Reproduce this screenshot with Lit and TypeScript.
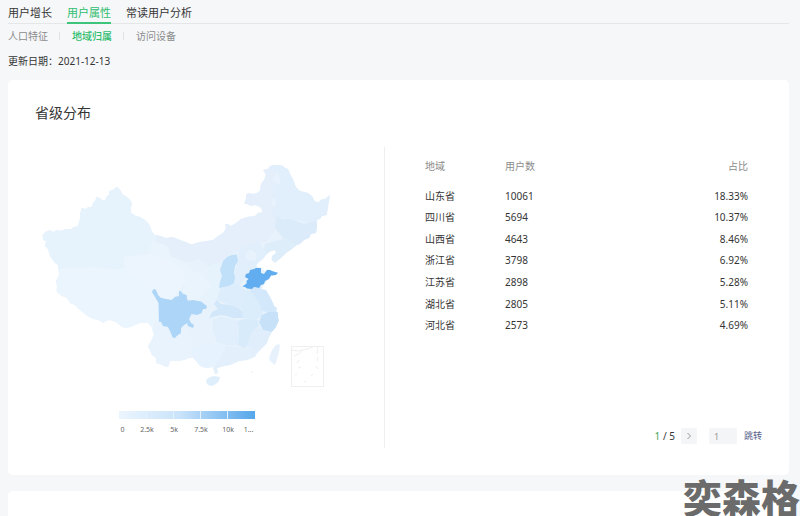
import { LitElement, html, svg, css } from "lit";
import { customElement, state } from "lit/decorators.js";

interface Region { name: string; fill: string; d: string; }

const MAINLAND =
  "M42.700 235L45 232 48 231 50 230 53 232 57 230 60 231 66 229 71 229 74 227 78 226 79 222 80 219 80 214 81.700 208 86 209 88 207 91.700 207 93 203 95 201 96.700 197 100 198 102 200 105 200.700 107 196 109 195 109 191 113 190 115 188 117.300 187 121 191 122 194 127 197 130 200 132 203 131 208 131 213 136 216 140 217 145 220 149 224 150.700 228 152 232 155 235 160 236 166 238 173 237 180 240 186 242 190 244 193 244 200 242 206.700 241 213 240 218 236 223 233 226 228 225 224 228 224 231 226 236 223 241 219 248 216.700 255 216 258 213 262.700 212 261 208 258 206 255 205 251 206 247 204 244 204 246 199 246 195 248 193 253 194 257 193 260 190.700 261 184 264 180 266 175 263 170 268 169 270 166 276.700 165 283 166 285 168 288 169 290 174 293 179 295 185 296.700 188 300 191 308 193 312 196 315 201.700 319 202 322 199 325 199 330 195 329 201 328 207 326.700 215 322 216 320 219 316.700 220 317 226 316 233 311 234 309 238 304 240 300 244 296.700 245 292 249 286 253 281 258 275 262.700 271.700 260 272 256 276 253 275 250 269 252 264 258 258 263 256 266 261 268 265 271 268 269 273 271 278 272.700 275 275 270 276.700 267 281 264 285 261 289 266 290 270 297 273 303 274 306 277 308 276 311 278 313 278 318 279 320 276 327 272 332 269 337 267 343 262 348 257 353 255 356.700 247 360 239 361 230 365 224 366 217 368 218 373 215 374 213 367 206 368 200 366 196 361 193 358 189 358 184 360 177 361 170 361 168 367 164 366 160 364 156 363 156 358 152 355 148 346 151 341 154 335 151.700 327 148 323 140 323 133 326 127 328 122 327 116 322 110 320 106 321 103 323 99 320 93 319 86 315 80 310 75 305 70 303 67 298 62 296 56.700 292 57 286 56 281 59 275 58 265 55 263 52 259 50 256 48 249 45 246 46 241 43 240z";

const REGIONS: Region[] = [
  { name: "西藏自治区", fill: "#ebf5fd", d: "M40 267L86 268 124 256 128 272 150 282 160 298 157 330 130 345 40 310z" },
  { name: "新疆维吾尔自治区", fill: "#e6f2fc", d: "M35 180H140L162 232 158 240 160 246 150 249 146 254 126 256 123 262 125 268 112 269 90 267 58 269 35 260z" },
  { name: "青海省", fill: "#ecf5fd", d: "M124 257L150 254 168 259 183 268 187 281 179 290 171 300 160 298 153 291 140 280 128 272z" },
  { name: "甘肃省", fill: "#eaf4fd", d: "M153 240L166 244 170 256 184 260 191 270 203 275 211 286 203 295 198 300 188 300 183 291 187 281 183 268 168 259 148 254z" },
  { name: "内蒙古自治区", fill: "#e4effb", d: "M157 230L195 236 240 200 242 160 290 160 272 178 280 186 271 202 276 216 277 228 266 242 250 246 240 250 229 255 220 262 208 266 199 259 190 262 184 262 171 256 168 246 156 242z" },
  { name: "黑龙江省", fill: "#e1eefb", d: "M263 160H290L335 190V220L316 224 306 222 292 219 276 217 271 210 277 203 272 195 274 186 281 183 278 173z" },
  { name: "吉林省", fill: "#dbebfa", d: "M276 216L283 219 292 219 304 224 318 220 320 238 298 247 291 241 284 239 275 228z" },
  { name: "辽宁省", fill: "#deedfa", d: "M265 244L275 241 287 238 298 246 284 262 270 266 272 251 262 257z" },
  { name: "河北省", fill: "#e0effb", d: "M239 249L249 245 259 243 266 252 262 262 256 268 249 270 244 280 238 287 234 284 235 271 238 261z" },
  { name: "北京市", fill: "#e7f2fc", d: "M246 252L251 249 256 253 256 261 248 260 245 257z" },
  { name: "陕西省", fill: "#e6f2fc", d: "M209 270L222 260 220 288 217 300 207 303 199 298 211 286z" },
  { name: "河南省", fill: "#deedfb", d: "M220 289L234 283 242 287 246 292 244 304 241 310 230 305 217 300z" },
  { name: "湖北省", fill: "#d2e8fa", d: "M217 300L221 304 230 305 238 308 243 312 244 318 233 318 227 316 220 315 209 318 212 312 218 309 214 304z" },
  { name: "安徽省", fill: "#dbecfb", d: "M244 290L252 291 258 300 263 308 262 316 256 320 243 318 242 308z" },
  { name: "江苏省", fill: "#d3e8fa", d: "M249 289L261 287 282 300 282 312 268 312 262 311 259 302z" },
  { name: "浙江省", fill: "#c7e1f8", d: "M262 315L268 312 282 312V326L271 332 263 330 259 322z" },
  { name: "江西省", fill: "#d8ebfa", d: "M238 321L245 319 258 320 259 326 253 331 250 336 248 345 244 348 238 345 239 332z" },
  { name: "湖南省", fill: "#e0effb", d: "M213 320L220 317 233 319 238 321 239 332 238 345 226 345 217 342 213 330z" },
  { name: "福建省", fill: "#e0eefb", d: "M259 327L263 330 271 332 280 332 262 356 248 346 250 336 253 331z" },
  { name: "广东省", fill: "#e3f0fc", d: "M226 346L244 348 250 346 262 356 215 378 212 366 220 358z" },
  { name: "广西壮族自治区", fill: "#e6f2fd", d: "M195 347L213 343 226 346 220 358 212 370 196 368 189 355z" },
  { name: "云南省", fill: "#e8f3fd", d: "M156 321L165 327 173 338 181 330 187 328 193 345 190 352 196 361 180 370 150 372 146 345z" },
];

const ISLANDS_AND_PEAKS: Region[] = [
  { name: "山西省", fill: "#c0dff9", d: "M223 261L227 257 231.700 255 236.700 254.500 238 261 235 266 234 272 235 278 234 283 229 286 219 288 220 282 222 276 220 270z" },
  { name: "四川省", fill: "#add5f8", d: "M152 292L153 289.500 155 289 157 292 158 295 160.700 297.700 166 299 171.700 300 175 297 179 296 179 291 181 291.500 183 294 186.700 295 187 299 188 300.700 193 300 201.700 301.700 204 304 207 306 206 309 203 309 201.700 313 197 315 191.700 314 189 319 191 323 194 325 193 328 188 326 187 323 184 325 181 328 181 333 176.700 336 175 338 172.700 337.500 170 331 168 327 163 326 161 321.700 159 321.700 158.500 303 155 297z" },
  { name: "山东省", fill: "#62adef", d: "M242.300 286.500L246.700 283.500 246.500 281 248.500 279 245 277 246 274 249 273 250 270 254 269 256 268 261 268 261 273 264 274 267 270 270 270 272 271 275 272 278 272.700 276 275 271 275.500 269 279 265 281 264 284 261 285 259 288 254 287 252 289 247 288.500 245 287z" },
  { name: "台湾省", fill: "#e6f1fc", d: "M272 350L275 346 278 344 280 345 279 352 277 359 275 365 271 362 269 358z" },
  { name: "海南省", fill: "#dfeefb", d: "M207 379L210 377 214 376 220 377 219 381 216 384 212 386 208 385 206 382z" },
];

const ROWS: [string, number, string][] = [
  ["山东省", 10061, "18.33%"],
  ["四川省", 5694, "10.37%"],
  ["山西省", 4643, "8.46%"],
  ["浙江省", 3798, "6.92%"],
  ["江苏省", 2898, "5.28%"],
  ["湖北省", 2805, "5.11%"],
  ["河北省", 2573, "4.69%"],
];

const shape = (r: Region) => svg`<path fill=${r.fill} d=${r.d}><title>${r.name}</title></path>`;

@customElement("province-map")
export class ProvinceMap extends LitElement {
  static styles = css`
    :host { display: block; }
    .map { display: block; width: 100%; }
    .legend { width: 136px; margin: 19px 0 0 83px; }
    .bar {
      display: grid; grid-template-columns: repeat(5, 27px); height: 8px;
      background: linear-gradient(90deg, #ebf5fe, #c9e3fa 45%, #56a6ea);
    }
    .bar i + i { border-left: 1px solid #e4f1fc; }
    .scale {
      display: grid; grid-template-columns: 7px 42px 12px 42px 12px 29px; justify-items: center;
      margin-top: 6px; font-size: 7px; line-height: 10px; color: #666;
    }
  `;
  render() {
    return html`
      <svg class="map" viewBox="36 160 300 232" role="img" aria-label="省级分布地图">
        <clipPath id="land"><path d=${MAINLAND}></path></clipPath>
        <path fill="#e7f2fc" d=${MAINLAND}></path>
        <g clip-path="url(#land)">${REGIONS.map(shape)}</g>
        ${ISLANDS_AND_PEAKS.map(shape)}
        <g fill="none" stroke="#efefef">
          <rect x="291.500" y="346.500" width="32" height="40"></rect>
          <path d="M292 350l6 1 9-2 8-3M294 356l5-2 3-3M318 346l-1 8M318 357l-1 4M299 360l-2 3M298 368l3-1M316 366l2 3M295 375l2-1M311 376l2-2M304 382l2-1"></path>
          <path d="M251 372h2"></path>
        </g>
      </svg>
      <div class="legend">
        <div class="bar"><i></i><i></i><i></i><i></i><i></i></div>
        <div class="scale">
          <span>0</span><span>2.5k</span><span>5k</span><span>7.5k</span><span>10k</span><span>1...</span>
        </div>
      </div>
    `;
  }
}

@customElement("app-root")
export class AppRoot extends LitElement {
  @state() private page = 1;

  static styles = css`
    :host {
      display: flex; flex-direction: column; position: relative;
      box-sizing: border-box; min-height: 100vh; padding: 0 11px 0 8px;
      background: #f5f7f9; color: #353535;
      font: 10px/14px "Noto Sans", "Noto Sans CJK SC", sans-serif;
    }
    a { color: inherit; text-decoration: none; }
    .tabs {
      display: flex; gap: 15px; height: 23px; border-bottom: 1px solid #e4e6e8;
      font-size: 11px; line-height: 25px;
    }
    .tabs a { height: 22px; }
    .tabs .on { border-bottom: 2px solid #3fc47b; }
    .on { color: #2fbd6e; }
    .subs { display: flex; align-items: center; height: 24px; color: #8c8c8c; }
    .subs a + a { display: flex; align-items: center; }
    .subs a + a::before { content: ""; width: 1px; height: 8px; margin: 0 12px 0 11px; background: #e0e2e4; }
    .subs .on { font-weight: 500; color: #2fbd6e; }
    .date { display: flex; height: 26px; line-height: 26px; margin-bottom: 6px; }
    .card { background: #fff; border-radius: 5px; }
    .main { box-sizing: border-box; min-height: 395px; padding: 23px 27px 27px; }
    h1 { margin: 0; font-size: 14px; line-height: 20px; font-weight: 400; }
    .cols { display: grid; grid-template-columns: 350px 1fr; margin-top: 24px; }
    .left { border-right: 1px solid #eeeeee; box-sizing: border-box; padding: 13px 48px 13px 1px; }
    .right { display: flex; flex-direction: column; justify-content: space-between; padding-left: 40px; }
    table { width: 100%; height: 189px; border-collapse: collapse; }
    th, td { padding: 0; text-align: left; font-weight: 400; }
    th { height: 38px; color: #8c8c8c; }
    th:first-child { width: 80px; }
    th:last-child, td:last-child { text-align: right; padding-right: 14px; }
    .pager { display: flex; align-items: center; justify-content: flex-end; height: 16px; margin-bottom: 4px; }
    .cur { color: #3fa55c; }
    .next {
      display: grid; place-items: center; width: 16px; height: 16px; margin: 0 12px 0 6px;
      padding: 0; border: 0; border-radius: 2px; background: #f4f5f6;
    }
    .jump {
      box-sizing: border-box; width: 28px; height: 16px; border: 0; padding: 0 5px; margin-right: 7px;
      border-radius: 2px; background: #f4f5f6; color: #999; font: inherit; font-size: 9px;
    }
    .go { border: 0; padding: 0; background: none; color: #56608a; font: inherit; font-size: 9px; }
    .more { flex: 1; min-height: 25px; margin-top: 16px; border-radius: 5px 5px 0 0; }
    .mark {
      position: absolute; right: 0; bottom: 0; color: #6b6b6b; white-space: nowrap;
      font: 900 39px/39px "Noto Sans CJK SC", sans-serif;
    }
  `;

  render() {
    return html`
      <nav class="tabs">
        <a href="#growth">用户增长</a><a class="on" href="#attrs">用户属性</a><a href="#readers">常读用户分析</a>
      </nav>
      <nav class="subs">
        <a href="#people">人口特征</a><a class="on" href="#region">地域归属</a><a href="#device">访问设备</a>
      </nav>
      <div class="date"><span>更新日期：</span><time datetime="2021-12-13">2021-12-13</time></div>
      <section class="card main">
        <h1>省级分布</h1>
        <div class="cols">
          <div class="left"><province-map></province-map></div>
          <div class="right">
            <table>
              <thead><tr><th>地域</th><th>用户数</th><th>占比</th></tr></thead>
              <tbody>
                ${ROWS.map(([n, c, p]) => html`<tr><td>${n}</td><td>${c}</td><td>${p}</td></tr>`)}
              </tbody>
            </table>
            <div class="pager">
              <span><span class="cur">${this.page}</span> / 5</span>
              <button class="next" aria-label="下一页" @click=${() => (this.page = Math.min(5, this.page + 1))}>
                <svg width="6" height="8" viewBox="0 0 6 8"><path d="M1.500 1l3 3-3 3" fill="none" stroke="#999"></path></svg>
              </button>
              <input class="jump" aria-label="页码" .value=${String(this.page)} />
              <button class="go">跳转</button>
            </div>
          </div>
        </div>
      </section>
      <section class="card more"></section>
      <div class="mark">奕森格</div>
    `;
  }
}
